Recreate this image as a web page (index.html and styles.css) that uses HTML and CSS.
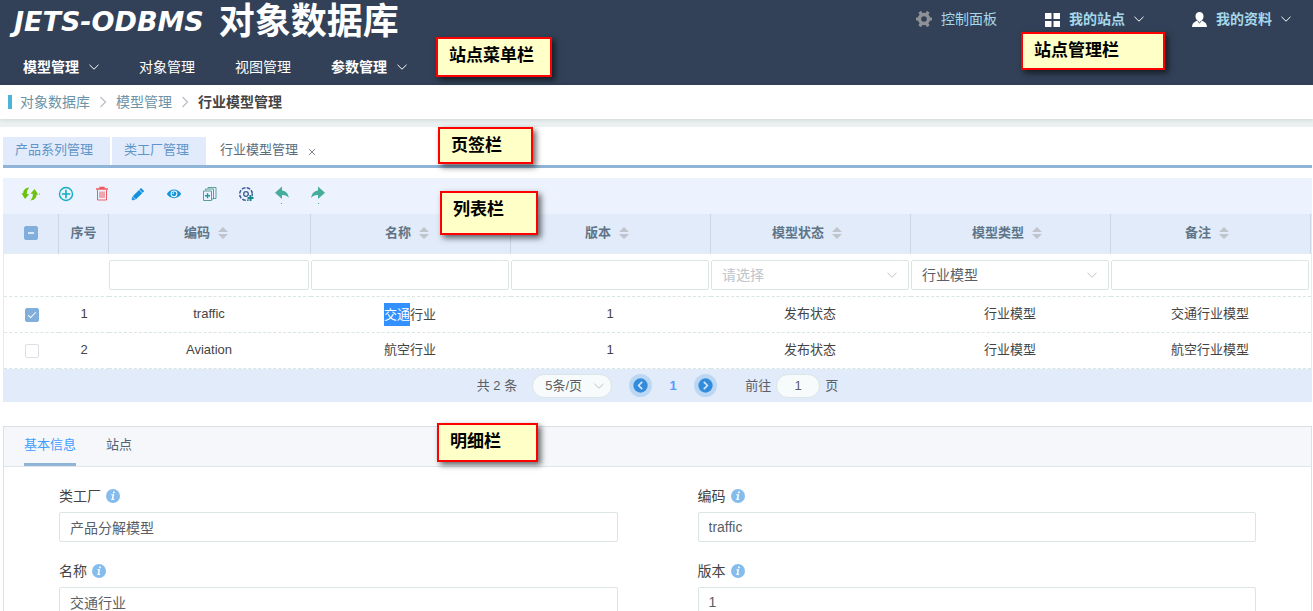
FILE: index.html
```html
<!DOCTYPE html>
<html lang="zh-CN">
<head>
<meta charset="utf-8">
<title>行业模型管理 - 对象数据库</title>
<link rel="stylesheet" href="styles.css">
</head>
<body>
<svg class="defs" aria-hidden="true">
  <symbol id="chevron" viewBox="0 0 10 10"><path d="M0.5 2.8 5 7.2 9.5 2.8" fill="none" stroke="currentColor"/></symbol>
  <symbol id="angle" viewBox="0 0 8 12"><path d="M1.5 1 6.5 6 1.5 11" fill="none" stroke="currentColor" stroke-width="1.2"/></symbol>
  <symbol id="sort" viewBox="0 0 10 12"><path d="M5 0 10 5H0zM5 12 0 7h10z" fill="currentColor"/></symbol>
  <symbol id="info" viewBox="0 0 14 14"><circle cx="7" cy="7" r="7" fill="#85bcee"/><path d="M7.2 2.6h1.7l-.3 1.7H6.9zM5.4 5.2h2.8L7.3 9.8h1l-.2 1.2H5.2l.2-1.2h.4l.7-3.5H5.200z" fill="#fff"/></symbol>
</svg>
<div class="app">
  <header class="header">
    <div class="header-top">
      <h1 class="brand"><span class="brand-en">JETS-ODBMS</span><span class="brand-zh">对象数据库</span></h1>
      <nav class="site-nav">
        <a class="site-link" href="#">
          <svg class="site-icon gear" viewBox="0 0 16 16"><circle cx="8" cy="8" r="4.500" fill="none" stroke="currentColor" stroke-width="3.400"/><path d="M3.600 0.800 6 4M12.400 0.800 10 4M3.600 15.200 6 12M12.400 15.200 10 12M0 8h3M13 8h3" stroke="currentColor" stroke-width="3.200"/></svg>
          控制面板</a>
        <a class="site-link strong" href="#">
          <svg class="site-icon" viewBox="0 0 15 15"><path d="M0 1h6.500v6H0zM8.500 1H15v6H8.500zM0 9h6.500v6H0zM8.500 9H15v6H8.500z" fill="currentColor"/></svg>
          我的站点<svg class="chevron"><use href="#chevron"/></svg></a>
        <a class="site-link strong" href="#">
          <svg class="site-icon" viewBox="0 0 15 15"><path d="M7.500 0a4 4 0 0 1 4 4.300c0 2-1 3.600-2 4.400 3 .9 5.300 2.500 5.500 6.300H0c.2-3.800 2.500-5.400 5.500-6.300-1-.8-2-2.400-2-4.400a4 4 0 0 1 4-4.300z" fill="currentColor"/><path d="M5.600 9 7.500 10.800 9.400 9" fill="none" stroke="#324157"/></svg>
          我的资料<svg class="chevron"><use href="#chevron"/></svg></a>
      </nav>
    </div>
    <nav class="menu">
      <a class="menu-item strong" href="#">模型管理<svg class="chevron"><use href="#chevron"/></svg></a>
      <a class="menu-item" href="#">对象管理</a>
      <a class="menu-item" href="#">视图管理</a>
      <a class="menu-item strong" href="#">参数管理<svg class="chevron"><use href="#chevron"/></svg></a>
    </nav>
  </header>

  <nav class="breadcrumb">
    <a href="#">对象数据库</a><svg class="crumb-sep"><use href="#angle"/></svg>
    <a href="#">模型管理</a><svg class="crumb-sep"><use href="#angle"/></svg>
    <span class="crumb-current">行业模型管理</span>
  </nav>

  <main class="content">
    <div class="tabs">
      <button class="tab" type="button">产品系列管理</button>
      <button class="tab" type="button">类工厂管理</button>
      <button class="tab active" type="button">行业模型管理<svg class="tab-close" viewBox="0 0 8 8"><path d="M1 1l6 6M7 1 1 7" stroke="currentColor" stroke-width=".8"/></svg></button>
    </div>

    <section class="list">
      <div class="toolbar">
        <button class="tool" type="button" aria-label="刷新"><svg viewBox="0 0 20 20"><g fill="#6cc10b"><path d="M9.500 3.500C5.500 3.800 3.200 6 3.200 9.300H1.500L5 15 9.300 10.200H6.900C6.700 7.500 7.400 5.200 9.500 3.500z"/><path d="M10.200 16.500c4-.3 6.300-2.500 6.300-5.800h1.700L14.700 5 10.400 9.800h2.400c.2 2.700-.5 5-2.600 6.700z"/><path d="M19 9.500h1v1h-1z"/></g></svg></button>
        <button class="tool" type="button" aria-label="新增"><svg viewBox="0 0 20 20"><g fill="none" stroke="#13adc6"><circle cx="10" cy="10" r="6.500" stroke-width="1.400"/><path d="M10 5.800v8.400M5.800 10h8.400" stroke-width="1.600"/></g></svg></button>
        <button class="tool" type="button" aria-label="删除"><svg viewBox="0 0 20 20"><g fill="none" stroke="#ef5a62"><path d="M4 5h12M8 5V3.500h4V5" stroke-width="1.400"/><path d="M5.500 6v10h9V6M8 7.500V14M10 7.500V14M12 7.500V14"/></g></svg></button>
        <button class="tool" type="button" aria-label="编辑"><svg viewBox="0 0 20 20"><path d="M13 4.300 16 7.200 14.700 8.500 11.700 5.600zM11 6.300 14 9.200 8 15 5 12.200zM4.500 12.800 7.200 15.500 4 16z" fill="#138fde" stroke="#138fde" stroke-width=".5"/></svg></button>
        <button class="tool" type="button" aria-label="查看"><svg viewBox="0 0 20 20"><path d="M2.800 10C6 4 14 4 17.200 10 14 15.500 6 15.500 2.800 10z" fill="#1595dc"/><circle cx="10" cy="9.800" r="3.400" fill="#fff"/><circle cx="10" cy="9.800" r="2.400" fill="#1595dc"/><path d="M10 9.800V8.200a1.600 1.600 0 0 0-1.600 1.600z" fill="#fff"/></svg></button>
        <button class="tool" type="button" aria-label="复制"><svg viewBox="0 0 20 20"><g fill="none" stroke="#5a9e97"><path d="M3.500 7h8v9.500h-8zM5.500 6.500V5h8v10H12M8 4.500v-1h8v11h-2"/><path d="M7.500 9.300v5M5 11.800h5" stroke="#1b9a9c" stroke-width="1.400"/></g></svg></button>
        <button class="tool" type="button" aria-label="设置"><svg viewBox="0 0 20 20"><g fill="none" stroke="#3a5a96"><circle cx="10" cy="10" r="6.300" stroke-width="1.500" stroke-dasharray="3.600 1.350"/><circle cx="10" cy="10" r="2.300" stroke-width="1.300"/></g><path d="M14.500 11v6M11.500 14h6" stroke="#edf3fe" stroke-width="3"/><path d="M14.500 11v6M11.500 14h6" stroke="#138a86" stroke-width="2"/></svg></button>
        <button class="tool" type="button" aria-label="撤销"><svg viewBox="0 0 20 20"><path d="M10 2.500v4c4 .4 6.300 3.200 6.800 7.500-2-2.500-4-3.200-6.800-3v4L3 8.800z" fill="#46ad9c"/><path d="M9 19h1v1H9z" fill="#46ad9c"/></svg></button>
        <button class="tool" type="button" aria-label="重做"><svg viewBox="0 0 20 20"><path d="M10 2.500v4c-4 .4-6.300 3.200-6.800 7.500 2-2.500 4-3.200 6.800-3v4l7-6.200z" fill="#46ad9c"/><path d="M10 19h1v1h-1z" fill="#46ad9c"/></svg></button>
      </div>

      <table class="grid">
        <colgroup><col class="col-check"><col class="col-index"><col class="col-code"><col><col><col><col><col></colgroup>
        <thead>
          <tr class="grid-head">
            <th><input class="check partial" type="checkbox" aria-label="全选"></th>
            <th>序号</th>
            <th>编码<svg class="sort"><use href="#sort"/></svg></th>
            <th>名称<svg class="sort"><use href="#sort"/></svg></th>
            <th>版本<svg class="sort"><use href="#sort"/></svg></th>
            <th>模型状态<svg class="sort"><use href="#sort"/></svg></th>
            <th>模型类型<svg class="sort"><use href="#sort"/></svg></th>
            <th>备注<svg class="sort"><use href="#sort"/></svg></th>
          </tr>
        </thead>
        <tbody>
          <tr class="grid-filter">
            <td></td>
            <td></td>
            <td><input class="field" type="text" aria-label="编码"></td>
            <td><input class="field" type="text" aria-label="名称"></td>
            <td><input class="field" type="text" aria-label="版本"></td>
            <td><div class="select"><select class="field empty" aria-label="模型状态"><option>请选择</option></select><svg class="select-arrow"><use href="#chevron"/></svg></div></td>
            <td><div class="select"><select class="field" aria-label="模型类型"><option>行业模型</option></select><svg class="select-arrow"><use href="#chevron"/></svg></div></td>
            <td><input class="field" type="text" aria-label="备注"></td>
          </tr>
          <tr class="grid-row">
            <td><input class="check" type="checkbox" checked aria-label="选择 traffic"></td>
            <td>1</td><td>traffic</td><td><mark class="selected">交通</mark>行业</td><td>1</td><td>发布状态</td><td>行业模型</td><td>交通行业模型</td>
          </tr>
          <tr class="grid-row">
            <td><input class="check" type="checkbox" aria-label="选择 Aviation"></td>
            <td>2</td><td>Aviation</td><td>航空行业</td><td>1</td><td>发布状态</td><td>行业模型</td><td>航空行业模型</td>
          </tr>
        </tbody>
      </table>

      <div class="pager">
        <span>共 2 条</span>
        <div class="select page-size"><select class="pill" aria-label="每页条数"><option>5条/页</option></select><svg class="select-arrow"><use href="#chevron"/></svg></div>
        <div class="page-nav">
          <button class="page-step" type="button" aria-label="上一页"><svg viewBox="0 0 22 22"><circle cx="11" cy="11" r="7.500" fill="#338cdb"/><path d="M12.800 7.200 9 11l3.800 3.800" fill="none" stroke="#dce9f8" stroke-width="1.600"/></svg></button>
          <button class="page-num" type="button">1</button>
          <button class="page-step" type="button" aria-label="下一页"><svg viewBox="0 0 22 22"><circle cx="11" cy="11" r="7.500" fill="#338cdb"/><path d="M9.200 7.200 13 11l-3.800 3.800" fill="none" stroke="#dce9f8" stroke-width="1.600"/></svg></button>
        </div>
        <label class="jump">前往<input class="pill jump-input" type="text" value="1">页</label>
      </div>
    </section>

    <section class="detail">
      <div class="detail-tabs">
        <button class="detail-tab active" type="button">基本信息</button>
        <button class="detail-tab" type="button">站点</button>
      </div>
      <form class="form">
        <div class="form-item"><label class="form-label" for="factory">类工厂<svg class="info"><use href="#info"/></svg></label><input class="field" id="factory" type="text" value="产品分解模型"></div>
        <div class="form-item"><label class="form-label" for="code">编码<svg class="info"><use href="#info"/></svg></label><input class="field" id="code" type="text" value="traffic"></div>
        <div class="form-item"><label class="form-label" for="name">名称<svg class="info"><use href="#info"/></svg></label><input class="field" id="name" type="text" value="交通行业"></div>
        <div class="form-item"><label class="form-label" for="version">版本<svg class="info"><use href="#info"/></svg></label><input class="field" id="version" type="text" value="1"></div>
      </form>
    </section>
  </main>

  <div class="note note-menu">站点菜单栏</div>
  <div class="note note-site">站点管理栏</div>
  <div class="note note-tabs">页签栏</div>
  <div class="note note-list">列表栏</div>
  <div class="note note-detail">明细栏</div>
</div>
</body>
</html>
```

FILE: styles.css
```css
*, *::before, *::after { box-sizing: border-box; }

body {
  margin: 0;
  background: #fff;
  color: #444;
  font: 13px/20px "Liberation Sans", "Noto Sans CJK SC", sans-serif;
}

button, input, select { font: inherit; color: inherit; }
button { padding: 0; border: 0; background: none; cursor: pointer; }
a { color: inherit; text-decoration: none; }
svg { display: block; flex: none; }

.defs { position: absolute; width: 0; height: 0; }
.app { position: relative; height: 100vh; overflow: hidden; }
.strong { font-weight: 700; }
.chevron { width: 10px; height: 10px; }

/* Header */
.header { background: #324157; color: #fff; font-size: 14px; }
.header-top { display: flex; justify-content: space-between; height: 44px; padding: 0 22px 0 14px; }
.brand { display: flex; align-items: center; gap: 15px; margin: 0; }
.brand-en { font: italic bold 27px/44px "DejaVu Sans", sans-serif; }
.brand-zh { font: bold 36px/42px "Liberation Sans", "Noto Sans CJK SC", sans-serif; }
.site-nav { display: flex; gap: 48px; height: 38px; }
.site-link { display: flex; align-items: center; gap: 9px; color: #a5d8ea; }
.site-icon { width: 15px; height: 15px; color: #fff; }
.site-icon.gear { width: 16px; height: 16px; color: #8e9196; }
.site-link .chevron { color: #fff; }
.menu { display: flex; padding: 5px 3px 0; }
.menu-item { display: flex; align-items: center; gap: 10px; height: 36px; padding: 0 20px; }

/* Breadcrumb */
.breadcrumb {
  position: relative;
  display: flex;
  align-items: center;
  gap: 9px;
  height: 34px;
  padding: 0 8px;
  color: #6c93a6;
  font-size: 14px;
  box-shadow: 0 1px 4px rgba(0, 21, 41, .12);
}
.breadcrumb::before { content: ""; width: 4px; height: 14px; margin-right: -1px; background: #4ab5d8; }
.crumb-sep { width: 8px; height: 12px; color: #b9bfc8; }
.crumb-current { color: #444; font-weight: 700; }

.content { padding: 10px 1px 0 3px; border-top: 8px solid #ebf0f0; }

/* Page tabs */
.tabs { display: flex; gap: 2px; border-bottom: 3px solid #8fb4d7; }
.tab { height: 28px; padding: 0 17px 2px 12px; background: #e1ebfc; color: #5f95c8; }
.tab.active { display: flex; align-items: center; gap: 10px; background: #fff; color: #5a6b7b; }
.tab-close { width: 8px; height: 8px; margin-top: 4px; }

/* List */
.list { margin-top: 10px; }
.toolbar { display: flex; align-items: center; gap: 16px; height: 36px; padding: 0 17px 4px; background: #edf3fe; }
.tool { width: 20px; height: 20px; }

.grid { width: 100%; table-layout: fixed; border-collapse: separate; border-spacing: 0; border: solid #e1ebfa; border-width: 0 1px; text-align: center; }
.grid th, .grid td { padding: 0; }
.col-check { width: 55px; }
.col-index { width: 50px; }
.col-code { width: 202px; }
.grid-head th { height: 40px; padding-bottom: 2px; background: #e1ebfa; border-right: 1px solid #c8d6e6; border-bottom: 1px solid #e6ecf2; color: #5f7486; }
.grid-filter td { height: 43px; text-align: left; }
.grid-row td { height: 36px; padding-bottom: 1px; }
.grid-row td:nth-child(n+3) { padding-right: 2px; }
.grid-filter td, .grid-row td { border-bottom: 1px dashed #d9e5e5; }
.sort { display: inline-block; width: 10px; height: 12px; margin: 0 7px 0 8px; color: #c0c4cc; vertical-align: -2px; }
.selected { display: inline-block; background: #3390ff; color: #fff; line-height: 23px; }

.check { appearance: none; display: inline-grid; place-items: center; width: 14px; height: 14px; margin: 0; border: 1px solid #dcdfe6; border-radius: 2px; background: #fff; vertical-align: middle; }
.check:checked, .check.partial { border-color: #82aedb; background: #82aedb; }
.check:checked::after { content: ""; width: 4px; height: 8px; margin-bottom: 2px; border: solid #fff; border-width: 0 1px 1px 0; transform: rotate(45deg); }
.check.partial::after { content: ""; width: 6px; height: 2px; background: #d8e6f5; }

.field { display: block; width: 100%; height: 30px; padding: 0 10px; border: 1px solid #dbe5e6; border-radius: 2px; background: #fff; color: #5a5e66; font-size: 14px; }
.grid-filter .field { width: calc(100% - 2px); }
.select { position: relative; }
.select select { appearance: none; }
.select .empty { color: #c0c4cc; }
.select-arrow { position: absolute; top: 10px; right: 13px; width: 12px; height: 10px; color: #c0c4cc; pointer-events: none; }

/* Pager */
.pager { display: flex; align-items: center; justify-content: center; height: 33px; background: #e1ebfa; color: #5a5e66; }
.pill { height: 24px; border: 1px solid #dbe5e6; border-radius: 12px; background: #f7fbfb; }
.page-size { margin-left: 15px; }
.page-size select { display: block; width: 80px; padding: 0 12px; }
.page-size .select-arrow { top: 7px; right: 7px; }
.page-nav { display: flex; align-items: center; margin: 0 28px 0 17px; }
.page-step { width: 23px; height: 23px; padding: 1px; border-radius: 50%; background: #bcd7f4; }
.page-num { width: 42px; color: #529bff; font-weight: 700; }
.jump { display: flex; align-items: center; gap: 5px; }
.jump-input { width: 44px; text-align: center; }

/* Detail */
.detail { margin-top: 24px; border: 1px solid #dcdfe6; }
.detail-tabs { display: flex; gap: 30px; height: 40px; padding: 0 20px; background: #f5f7fb; border-bottom: 1px solid #dfe4ed; }
.detail-tab { height: 39px; border-bottom: 3px solid transparent; color: #4f6478; }
.detail-tab.active { border-color: #8fb4d7; color: #409eff; }
.form { display: grid; grid-template-columns: 1fr 1fr; gap: 15px 80px; padding: 15px 55px; }
.form-label { display: flex; align-items: center; gap: 5px; height: 30px; padding-bottom: 2px; font-size: 14px; }
.info { width: 14px; height: 14px; }

/* Notes laid over the page */
.note {
  position: absolute;
  padding: 5px 11px;
  border: 2px solid #f00;
  background: #ffffc8;
  box-shadow: 3px 3px 6px rgba(0, 0, 0, .6);
  color: #000;
  font-size: 17px;
  font-weight: 700;
  line-height: 24px;
}
.note-menu { top: 37px; left: 436px; width: 116px; height: 40px; }
.note-site { top: 32px; right: 148px; width: 144px; height: 38px; }
.note-tabs { top: 127px; left: 438px; width: 95px; height: 37px; }
.note-list { top: 191px; left: 440px; width: 98px; height: 44px; }
.note-detail { top: 423px; left: 437px; width: 101px; height: 39px; }
```
